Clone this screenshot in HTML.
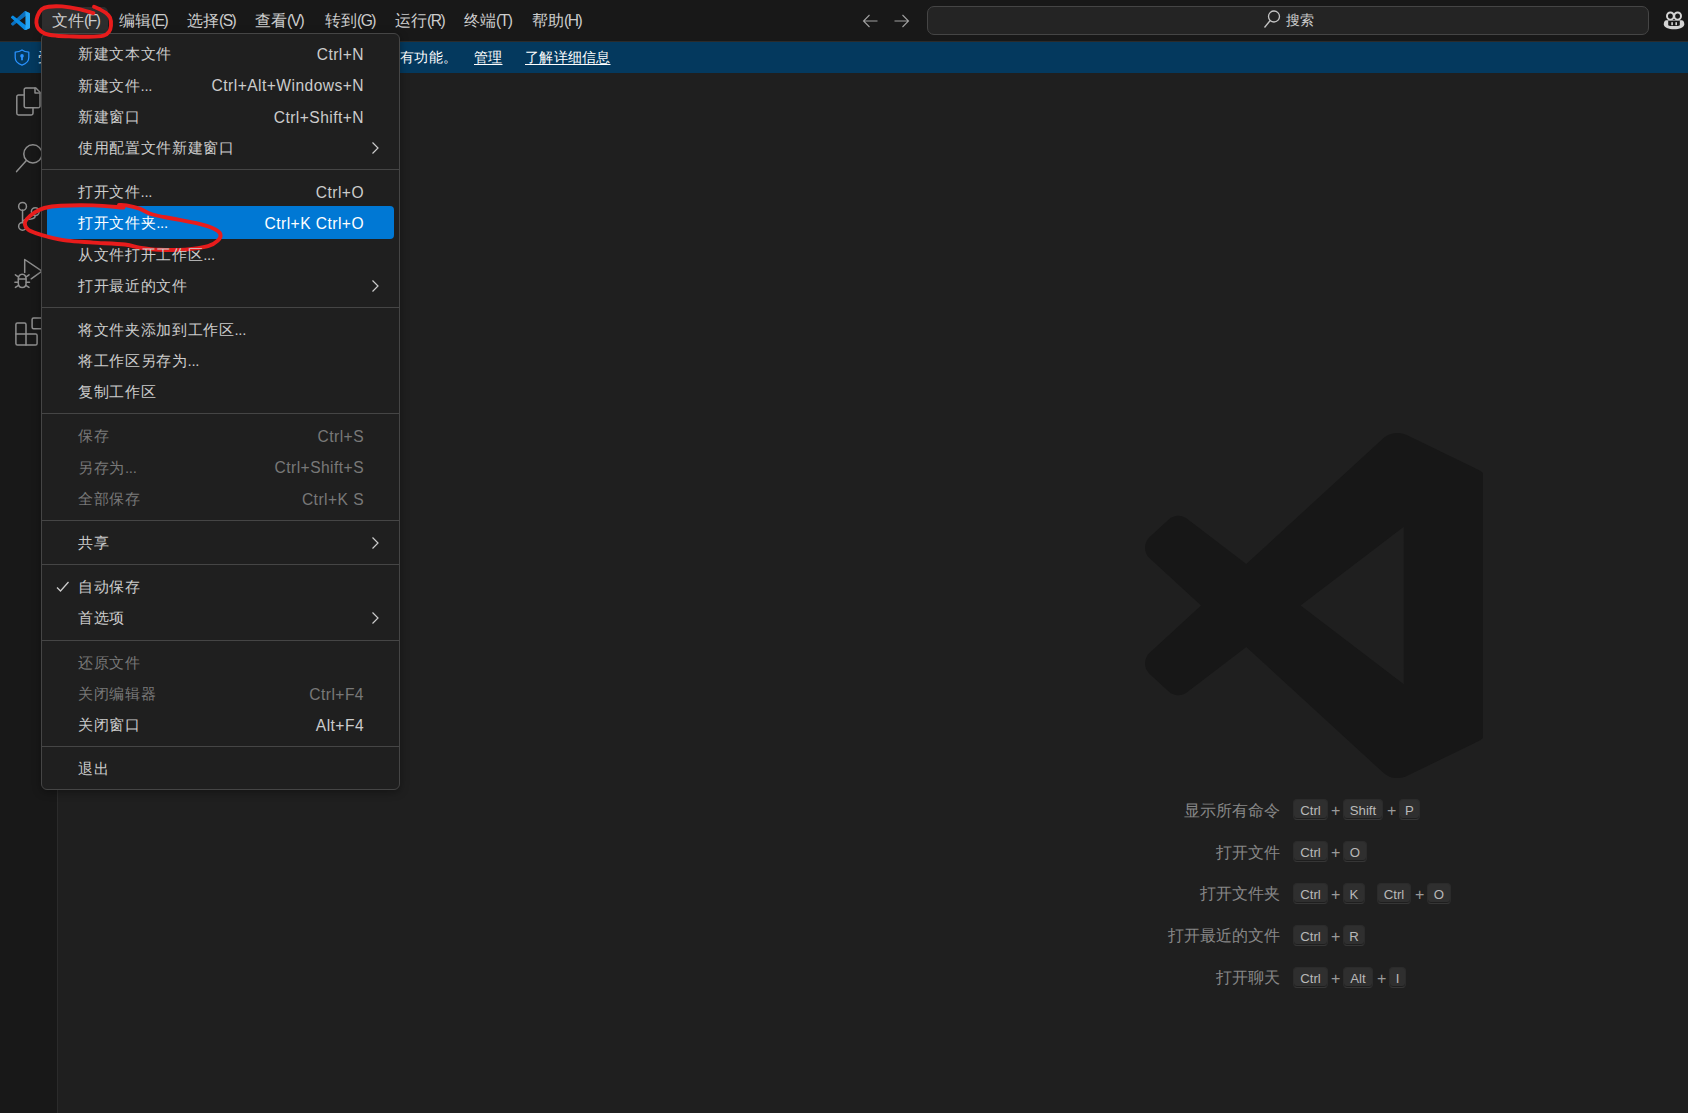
<!DOCTYPE html>
<html><head><meta charset="utf-8">
<style>
*{box-sizing:border-box;margin:0;padding:0}
html,body{width:1688px;height:1113px;overflow:hidden;background:#1f1f1f;font-family:"Liberation Sans",sans-serif;color:#cccccc}
.abs{position:absolute}
#titlebar{position:absolute;left:0;top:0;width:1688px;height:42px;background:#181818;border-bottom:1px solid #2b2b2b}
.mb{position:absolute;top:7px;height:27px;line-height:27px;font-size:16px;color:#cccccc;white-space:nowrap}
.mb .lat{letter-spacing:-1.5px;font-size:15.6px}
.mbsel{position:absolute;left:42px;top:7px;width:66px;height:27px;background:#2e2e2e;border-radius:5px}
#cc{position:absolute;left:927px;top:6px;width:722px;height:29px;background:#242424;border:1px solid #454545;border-radius:7px}
#banner{position:absolute;left:0;top:42px;width:1688px;height:31px;background:#04395e;color:#ffffff;font-size:14.4px}
#banner .t{position:absolute;top:0;line-height:31px;white-space:nowrap;letter-spacing:0.25px}
#banner u{text-decoration:underline;text-underline-offset:2px}
#activity{position:absolute;left:0;top:73px;width:58px;height:1040px;background:#181818;border-right:1px solid #2b2b2b}
#menu{position:absolute;left:41px;top:33px;width:359px;height:757px;background:#1f1f1f;border:1px solid #454545;border-radius:6px;box-shadow:0 2px 8px rgba(0,0,0,.36)}
#menu .items{position:absolute;left:0;top:4.4px;width:100%}
.it{position:relative;height:31.2px;line-height:31.2px;font-size:15px;color:#cccccc;white-space:nowrap}
.it .l{position:absolute;left:36px;z-index:1;letter-spacing:0.65px}
.it .k{position:absolute;top:0.8px;right:35px;z-index:1;letter-spacing:0.45px;font-size:15.6px}
.it svg.arr{position:absolute;left:327px;top:9px;width:12px;height:14px}
.it svg.chk{position:absolute;left:13px;top:8px;width:16px;height:16px}
.dots{font-style:normal;letter-spacing:-0.3px}
.it.dis{color:#787878}
.it.sel{color:#ffffff}
.it.sel::before{content:"";position:absolute;left:5px;right:5px;top:-1px;bottom:0;background:#0078d4;border-radius:4px}
.sep{height:13px;position:relative}
.sep::after{content:"";position:absolute;left:0;right:0;top:6px;height:1px;background:#454545}
.wl{position:absolute;right:408px;font-size:16.2px;color:#878787;white-space:nowrap;text-align:right;line-height:20px}
.kb{position:absolute;height:21px;line-height:20px;padding-top:1px;font-size:13.2px;color:#b9b9b9;background:#2f2f2f;border:1px solid #2b2b2b;border-bottom-color:#363636;box-shadow:inset 0 -1px 0 rgba(0,0,0,.36);border-radius:4px;text-align:center}
.plus{position:absolute;font-size:16px;color:#9a9a9a;line-height:21px}
</style></head>
<body>
<div id="titlebar">
  <svg class="abs" style="left:10.75px;top:10.75px" width="19.25" height="19.25" viewBox="0 0 100 100">
    <path fill="#0b6fbd" d="M96.46 10.8L75.85.87a6.23 6.23 0 0 0-7.1 1.21L1.27 63.68a4.17 4.17 0 0 0 0 6.16l5.51 5a4.17 4.17 0 0 0 5.32.24L93.34 13.4A4.17 4.17 0 0 1 100 16.46v-.23a6.26 6.26 0 0 0-3.54-5.43z"/>
    <path fill="#0a8be2" d="M96.46 89.2l-20.61 9.930a6.23 6.23 0 0 1-7.1-1.21L1.27 36.32a4.17 4.17 0 0 1 0-6.160l5.51-5a4.17 4.17 0 0 1 5.32-.24l81.24 61.68a4.17 4.17 0 0 0 6.66-3.31v.23a6.26 6.26 0 0 1-3.54 5.68z"/>
    <path fill="#27a7f3" d="M75.85 99.13a6.23 6.23 0 0 1-7.1-1.21c2.31 2.31 6.25.67 6.25-2.58V4.66c0-3.25-3.94-4.89-6.25-2.58a6.23 6.23 0 0 1 7.1-1.21l20.6 9.93A6.25 6.25 0 0 1 100 16.46v67.08a6.25 6.25 0 0 1-3.54 5.63z"/>
  </svg>
  <div class="mbsel"></div>
  <div class="mb" style="left:52px">文件<span class="lat">(F)</span></div>
  <div class="mb" style="left:119px">编辑<span class="lat">(E)</span></div>
  <div class="mb" style="left:187px">选择<span class="lat">(S)</span></div>
  <div class="mb" style="left:255px">查看<span class="lat">(V)</span></div>
  <div class="mb" style="left:325px">转到<span class="lat">(G)</span></div>
  <div class="mb" style="left:395px">运行<span class="lat">(R)</span></div>
  <div class="mb" style="left:464px">终端<span class="lat">(T)</span></div>
  <div class="mb" style="left:532px">帮助<span class="lat">(H)</span></div>
  <svg class="abs" style="left:861px;top:12px" width="18" height="18" viewBox="0 0 18 18" fill="none" stroke="#a0a0a0" stroke-width="1.1"><path d="M2.5 9H16.5M8.5 3L2.5 9l6 6"/></svg>
  <svg class="abs" style="left:892px;top:12px" width="18" height="18" viewBox="0 0 18 18" fill="none" stroke="#a0a0a0" stroke-width="1.1"><path d="M2.5 9H16.5M10.5 3l6 6-6 6"/></svg>
  <div id="cc"></div>
  <svg class="abs" style="left:1263px;top:10px" width="18" height="19" viewBox="0 0 18 19" fill="none" stroke="#c4c4c4" stroke-width="1.3"><circle cx="11" cy="6.5" r="5.5"/><path d="M7.2 10.5L1.5 17.5"/></svg>
  <div class="abs" style="left:1286px;top:9px;font-size:14.4px;line-height:22px;color:#cccccc">搜索</div>
  <svg class="abs" style="left:1660px;top:9px" width="28" height="24" viewBox="1660 9 28 24">
    <ellipse cx="1670.4" cy="16.1" rx="3.4" ry="3.6" fill="none" stroke="#d4d4d4" stroke-width="2"/>
    <ellipse cx="1677.6" cy="16.1" rx="3.4" ry="3.6" fill="none" stroke="#d4d4d4" stroke-width="2"/>
    <path fill="#d4d4d4" d="M1666 20.2H1682C1683.6 20.6 1684.4 22.5 1684.3 24.2C1684 27.5 1679.5 29.2 1674 29.2C1668.5 29.2 1664 27.5 1663.8 24.2C1663.7 22.5 1664.4 20.6 1666 20.2Z"/>
    <path fill="#181818" d="M1668.2 20.8H1679.8V25.2C1677.5 26.4 1670.5 26.4 1668.2 25.2Z"/>
    <rect x="1671.3" y="22.2" width="1.6" height="3" fill="#d4d4d4"/>
    <rect x="1675.4" y="22.2" width="1.6" height="3" fill="#d4d4d4"/>
  </svg>
</div>
<div id="banner">
  <svg class="abs" style="left:14px;top:7px" width="16" height="17" viewBox="0 0 16 17" fill="none" stroke="#2a92ff" stroke-width="1.25"><path d="M8 1C6.4 2.3 4 3 1.2 3V8.6c0 3.6 2.8 6.3 6.8 7.5 4-1.2 6.8-3.9 6.8-7.5V3C12 3 9.6 2.3 8 1z" stroke-linejoin="round"/><circle cx="8" cy="6.9" r="1.8" fill="#2a92ff" stroke="none"/><rect x="7.1" y="7.5" width="1.8" height="3.8" fill="#2a92ff" stroke="none"/></svg>
  <div class="t" style="left:38px">受限模式</div>
  <div class="t" style="left:400px">有功能。</div>
  <div class="t" style="left:474px"><u>管理</u></div>
  <div class="t" style="left:525px"><u>了解详细信息</u></div>
</div>
<div id="activity"></div>
<svg class="abs" style="left:0;top:0" width="58" height="360" fill="none" stroke="#8e8e8e" stroke-width="1.5" stroke-linejoin="round" stroke-linecap="round">
  <!-- explorer -->
  <path d="M23.6 95H18.5a1.7 1.7 0 0 0-1.7 1.7V113.3a1.7 1.7 0 0 0 1.7 1.7H31.3a1.7 1.7 0 0 0 1.7-1.7V108.6"/>
  <path d="M24.2 89.7a1.7 1.7 0 0 1 1.7-1.7H35.9L40 92.2V106.1a1.7 1.7 0 0 1-1.7 1.7H25.9a1.7 1.7 0 0 1-1.7-1.7z"/>
  <path d="M35 88V93.1H40"/>
  <!-- search -->
  <circle cx="32.9" cy="153.9" r="9.1"/>
  <path d="M26.4 160.6L16.6 171.6"/>
  <!-- scm -->
  <circle cx="22.55" cy="206.4" r="3.9"/>
  <circle cx="22.55" cy="226.3" r="3.9"/>
  <circle cx="35.3" cy="211.6" r="3.9"/>
  <path d="M22.55 210.3V222.4"/>
  <path d="M35.3 215.5C35.3 219 31 219.4 27.5 219.4C24.5 219.4 22.55 220.5 22.55 222.4"/>
  <!-- debug -->
  <path d="M24.7 272.5V259.5L42 271.2L31.2 278.8"/>
  <path d="M18.3 279.5C18.3 276 19.8 274.2 22.2 274.2C24.6 274.2 26.1 276 26.1 279.5V283C26.1 285.8 24.4 287.5 22.2 287.5C20 287.5 18.3 285.8 18.3 283Z"/>
  <path d="M18.3 279H26.1M18.3 276.8L15.4 274.8M26.1 276.8L29 274.8M18.3 282.3H14.9M26.1 282.3H29.5M18.6 285.3L15.4 287.4M25.8 285.3L29 287.4"/>
  <!-- extensions -->
  <path d="M17.4 322.9H24.5a1.5 1.5 0 0 1 1.5 1.5V334.1H35.6a1.5 1.5 0 0 1 1.5 1.5V343.4a1.5 1.5 0 0 1-1.5 1.5H17.4a1.5 1.5 0 0 1-1.5-1.5V324.4a1.5 1.5 0 0 1 1.5-1.5z"/>
  <path d="M15.9 334.1H26V344.9"/>
  <path d="M33.6 317.9H43.5V328.7H33.6a1.5 1.5 0 0 1-1.5-1.5V319.4a1.5 1.5 0 0 1 1.5-1.5z"/>
</svg>

<!-- editor watermark -->
<svg class="abs" style="left:1144.9px;top:431.5px;overflow:visible" width="345" height="347" viewBox="0 0 100 100" preserveAspectRatio="none">
  <defs><clipPath id="lpc"><rect x="-2" y="-2" width="100" height="104"/></clipPath></defs>
  <path clip-path="url(#lpc)" fill="#171717" fill-rule="evenodd" d="M70.9119 99.3171C72.4869 99.9307 74.2828 99.8914 75.8725 99.1264L96.4608 89.2197C98.6242 88.1787 100 85.9892 100 83.5872V16.4133C100 14.0113 98.6243 11.8218 96.4609 10.7808L75.8725 0.873756C73.7862 -0.130129 71.3446 0.11576 69.5135 1.44695C69.252 1.63711 69.0028 1.84943 68.769 2.08341L29.3551 38.0415L12.1872 25.0096C10.589 23.7965 8.35363 23.8959 6.86933 25.2461L1.36303 30.2549C-0.452552 31.9064 -0.454633 34.7627 1.35853 36.417L16.2471 50.0001L1.35853 63.5832C-0.454633 65.2374 -0.452552 68.0938 1.36303 69.7453L6.86933 74.7541C8.35363 76.1043 10.589 76.2037 12.1872 74.9905L29.3551 61.9587L68.769 97.9167C69.3925 98.5406 70.1246 99.0104 70.9119 99.3171ZM75.0152 27.2989L45.1091 50.0001L75.0152 72.7012V27.2989Z"/>
</svg>

<div class="wl" style="top:800px">显示所有命令</div>
<div class="kb" style="left:1293px;top:799px;width:35px">Ctrl</div>
<div class="plus" style="left:1331px;top:800px">+</div>
<div class="kb" style="left:1343px;top:799px;width:40px">Shift</div>
<div class="plus" style="left:1387px;top:800px">+</div>
<div class="kb" style="left:1399px;top:799px;width:21px">P</div>

<div class="wl" style="top:842px">打开文件</div>
<div class="kb" style="left:1293px;top:841px;width:35px">Ctrl</div>
<div class="plus" style="left:1331px;top:842px">+</div>
<div class="kb" style="left:1343px;top:841px;width:24px">O</div>

<div class="wl" style="top:883px">打开文件夹</div>
<div class="kb" style="left:1293px;top:883px;width:35px">Ctrl</div>
<div class="plus" style="left:1331px;top:884px">+</div>
<div class="kb" style="left:1343px;top:883px;width:22px">K</div>
<div class="kb" style="left:1377px;top:883px;width:34px">Ctrl</div>
<div class="plus" style="left:1415px;top:884px">+</div>
<div class="kb" style="left:1427px;top:883px;width:24px">O</div>

<div class="wl" style="top:925px">打开最近的文件</div>
<div class="kb" style="left:1293px;top:925px;width:35px">Ctrl</div>
<div class="plus" style="left:1331px;top:926px">+</div>
<div class="kb" style="left:1343px;top:925px;width:22px">R</div>

<div class="wl" style="top:967px">打开聊天</div>
<div class="kb" style="left:1293px;top:967px;width:35px">Ctrl</div>
<div class="plus" style="left:1331px;top:968px">+</div>
<div class="kb" style="left:1343px;top:967px;width:30px">Alt</div>
<div class="plus" style="left:1377px;top:968px">+</div>
<div class="kb" style="left:1389px;top:967px;width:17px">I</div>

<div id="menu">
 <div class="items">
  <div class="it"><span class="l">新建文本文件</span><span class="k">Ctrl+N</span></div>
  <div class="it"><span class="l">新建文件<i class="dots">...</i></span><span class="k">Ctrl+Alt+Windows+N</span></div>
  <div class="it"><span class="l">新建窗口</span><span class="k">Ctrl+Shift+N</span></div>
  <div class="it"><span class="l">使用配置文件新建窗口</span><svg class="arr" viewBox="0 0 12 14" fill="none" stroke="#cccccc" stroke-width="1.2"><path d="M3.5 1.5L9 7l-5.5 5.5"/></svg></div>
  <div class="sep"></div>
  <div class="it"><span class="l">打开文件<i class="dots">...</i></span><span class="k">Ctrl+O</span></div>
  <div class="it sel"><span class="l">打开文件夹<i class="dots">...</i></span><span class="k">Ctrl+K Ctrl+O</span></div>
  <div class="it"><span class="l">从文件打开工作区<i class="dots">...</i></span></div>
  <div class="it"><span class="l">打开最近的文件</span><svg class="arr" viewBox="0 0 12 14" fill="none" stroke="#cccccc" stroke-width="1.2"><path d="M3.5 1.5L9 7l-5.5 5.5"/></svg></div>
  <div class="sep"></div>
  <div class="it"><span class="l">将文件夹添加到工作区<i class="dots">...</i></span></div>
  <div class="it"><span class="l">将工作区另存为<i class="dots">...</i></span></div>
  <div class="it"><span class="l">复制工作区</span></div>
  <div class="sep"></div>
  <div class="it dis"><span class="l">保存</span><span class="k">Ctrl+S</span></div>
  <div class="it dis"><span class="l">另存为<i class="dots">...</i></span><span class="k">Ctrl+Shift+S</span></div>
  <div class="it dis"><span class="l">全部保存</span><span class="k">Ctrl+K S</span></div>
  <div class="sep"></div>
  <div class="it"><span class="l">共享</span><svg class="arr" viewBox="0 0 12 14" fill="none" stroke="#cccccc" stroke-width="1.2"><path d="M3.5 1.5L9 7l-5.5 5.5"/></svg></div>
  <div class="sep"></div>
  <div class="it"><svg class="chk" viewBox="0 0 16 16" fill="none" stroke="#cccccc" stroke-width="1.3"><path d="M2 8.5l3.5 3.5L13.5 3"/></svg><span class="l">自动保存</span></div>
  <div class="it"><span class="l">首选项</span><svg class="arr" viewBox="0 0 12 14" fill="none" stroke="#cccccc" stroke-width="1.2"><path d="M3.5 1.5L9 7l-5.5 5.5"/></svg></div>
  <div class="sep"></div>
  <div class="it dis"><span class="l">还原文件</span></div>
  <div class="it dis"><span class="l">关闭编辑器</span><span class="k">Ctrl+F4</span></div>
  <div class="it"><span class="l">关闭窗口</span><span class="k">Alt+F4</span></div>
  <div class="sep"></div>
  <div class="it"><span class="l">退出</span></div>
 </div>
</div>

<!-- red annotations -->
<svg class="abs" style="left:0;top:0" width="1688" height="1113" fill="none" stroke="#e81c1c" stroke-width="3.9" stroke-linecap="round" stroke-linejoin="round">
  <path d="M93.4 13.1C90.8 12.4 83.2 9.9 78.0 8.8C72.8 7.7 66.9 6.8 62.0 6.4C57.1 6.1 52.1 6.2 48.7 6.7C45.3 7.2 43.6 7.8 41.7 9.3C39.8 10.9 38.4 13.7 37.5 16.0C36.6 18.3 36.2 20.8 36.4 22.9C36.6 25.0 37.1 27.0 38.5 28.8C39.9 30.6 41.9 32.5 44.9 33.6C47.9 34.8 52.1 35.2 56.7 35.7C61.3 36.2 67.4 36.3 72.7 36.5C78.0 36.7 83.4 36.9 88.6 36.8C93.8 36.7 100.2 36.5 103.6 35.7C107.0 34.9 107.7 33.7 108.9 32.0C110.1 30.3 110.8 28.0 111.0 25.6C111.2 23.2 110.9 19.7 110.0 17.6C109.1 15.5 107.5 14.2 105.7 12.8C103.9 11.4 101.2 10.1 99.3 9.1C97.3 8.1 94.9 7.1 94.0 6.7"/>
  <path d="M123.5 207.5C118.5 207.2 103.7 205.7 93.2 205.4C82.7 205.1 68.8 205.3 60.6 205.8C52.5 206.2 48.6 206.9 44.3 208.0C39.9 209.1 37.4 210.8 34.5 212.6C31.6 214.4 28.3 217.1 26.7 219.1C25.1 221.1 24.6 222.6 24.8 224.3C25.0 226.0 26.1 228.0 28.0 229.5C29.9 231.0 33.2 232.2 36.5 233.4C39.8 234.6 42.5 235.5 47.6 236.7C52.7 237.9 59.5 239.6 67.1 240.6C74.7 241.6 83.5 241.9 93.2 242.6C102.9 243.2 117.3 243.7 125.0 244.5C132.7 245.3 133.8 246.7 139.5 247.6C145.2 248.5 151.5 249.5 159.1 249.8C166.7 250.1 177.0 250.2 185.2 249.6C193.3 249.0 202.6 247.7 208.0 246.2C213.4 244.7 215.7 242.6 217.8 240.6C219.9 238.6 221.0 236.0 220.4 234.1C219.8 232.2 218.2 230.6 214.5 228.9C210.8 227.2 205.3 225.4 198.2 223.7C191.1 222.0 179.7 220.0 172.1 218.5C164.5 217.0 158.0 216.1 152.6 214.5C147.2 212.9 143.8 210.2 139.5 208.7C135.2 207.2 129.9 206.0 126.5 205.4C123.1 204.8 120.2 205.1 119.0 205.0"/>
</svg>
</body></html>
